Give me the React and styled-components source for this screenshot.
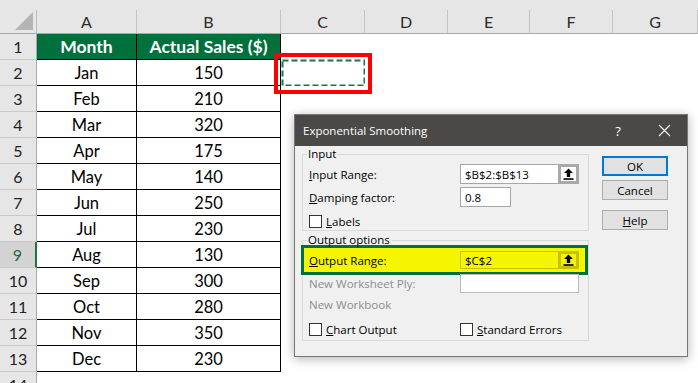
import React from "react";
import styled, { createGlobalStyle } from "styled-components";

const GlobalStyle = createGlobalStyle`
  html, body {
    margin: 0;
    padding: 0;
    background: #fff;
    overflow: hidden;
  }
  * { box-sizing: border-box; }
`;

const sales = [
  ["Jan", 150], ["Feb", 210], ["Mar", 320], ["Apr", 175],
  ["May", 140], ["Jun", 250], ["Jul", 230], ["Aug", 130],
  ["Sep", 300], ["Oct", 280], ["Nov", 350], ["Dec", 230],
];

const columns = ["A", "B", "C", "D", "E", "F", "G"];

const Page = styled.div`
  position: relative;
  width: 698px;
  height: 383px;
  overflow: hidden;
  background: #fff;
  font-family: Lato, "Liberation Sans", sans-serif;
`;

const TopStrip = styled.div`
  height: 10px;
  background: #e6e6e6;
`;

const Sheet = styled.div`
  display: grid;
  grid-template-columns: 37px 100px 144px 84px 83px 82px 83px 85px;
  grid-template-rows: 24px;
  grid-auto-rows: 26px;
`;

const Corner = styled.div`
  background: #e6e6e6;
  border-right: 1px solid #bdbdbd;
  border-bottom: 1px solid #a8a8a8;
  display: flex;
  justify-content: flex-end;
  align-items: flex-end;
  padding: 0 3px 3px 0;
`;

const CornerTriangle = styled.div`
  width: 0;
  height: 0;
  border-left: 18px solid transparent;
  border-bottom: 18px solid #b4b4b4;
`;

const ColHead = styled.div`
  background: #e6e6e6;
  border-right: 1px solid #c4c4c4;
  border-bottom: 1px solid #a8a8a8;
  display: flex;
  align-items: center;
  justify-content: center;
  font-size: 16px;
  color: #2b2b2b;
`;

const RowHead = styled.div`
  background: ${(p) => (p.$active ? "#d3d3d3" : "#e6e6e6")};
  color: ${(p) => (p.$active ? "#1e6b46" : "#222")};
  border-right: ${(p) => (p.$active ? "2px solid #217346" : "1px solid #a8a8a8")};
  border-bottom: 1px solid #c9c9c9;
  display: flex;
  align-items: center;
  justify-content: center;
  font-size: 16px;
`;

const Cell = styled.div`
  position: relative;
  background: ${(p) => (p.$head ? "#00703c" : "#fff")};
  color: ${(p) => (p.$head ? "#fff" : "#000")};
  font-weight: ${(p) => (p.$head ? 700 : 400)};
  font-size: ${(p) => (p.$head ? 17.5 : 16.5)}px;
  border-right: ${(p) => (p.$table ? "1px solid #000" : "none")};
  border-bottom: ${(p) => (p.$table ? "1px solid #000" : "none")};
  display: flex;
  align-items: center;
  justify-content: center;
  white-space: nowrap;
`;

const Marquee = styled.svg`
  position: absolute;
  left: 0;
  top: -1px;
  width: 84px;
  height: 28px;
`;

const Annotation = styled.div`
  position: absolute;
  left: 274px;
  top: 53px;
  width: 98px;
  height: 41px;
  border: 4px solid #ff0000;
`;

/* dialog */

const Dialog = styled.div`
  position: absolute;
  left: 294px;
  top: 114px;
  width: 394px;
  height: 243px;
  background: #f0f0f0;
  border: 1px solid #777;
  box-shadow: 0 2px 10px rgba(0, 0, 0, 0.3);
  font-family: "Open Sans", "Noto Sans", sans-serif;
  font-size: 11.5px;
  color: #000;
  display: flex;
  flex-direction: column;
`;

const TitleBar = styled.div`
  height: 31px;
  flex: none;
  background: #4a4947;
  color: #fff;
  display: flex;
  align-items: center;
  padding-left: 8px;
  font-size: 11.5px;
`;

const Title = styled.div`
  flex: 1;
`;

const TitleButton = styled.div`
  width: 46px;
  height: 100%;
  display: flex;
  align-items: center;
  justify-content: center;
  font-size: 13px;
`;

const Body = styled.div`
  flex: 1;
  display: flex;
  padding: 0 0 0 7px;
`;

const Left = styled.div`
  width: 287px;
  display: flex;
  flex-direction: column;
`;

const Group = styled.fieldset`
  margin: ${(p) => p.$mt}px 0 0 0;
  padding: 3px 6px ${(p) => p.$pb}px 6px;
  border: 1px solid #d9d9d9;
  min-width: 0;
`;

const Legend = styled.legend`
  padding: 0 1px;
  margin-left: -2px;
  line-height: 14px;
  height: 14px;
`;

const Row = styled.div`
  display: flex;
  align-items: center;
  height: ${(p) => p.$h}px;
  margin-top: ${(p) => p.$mt || 0}px;
  color: ${(p) => (p.$disabled ? "#8d8d8d" : "#000")};
`;

const Label = styled.div`
  width: 151px;
  flex: none;
`;

const TextBox = styled.div`
  display: flex;
  align-items: center;
  height: ${(p) => p.$h || 20}px;
  width: ${(p) => p.$w}px;
  background: ${(p) => (p.$yellow ? "#f5f500" : "#fff")};
  border: 1px solid ${(p) => (p.$yellow ? "#c4c400" : p.$disabled ? "#b9b9b9" : "#a6a6a6")};
  padding-left: 4px;
`;

const BoxText = styled.div`
  flex: 1;
`;

const UpButton = styled.div`
  width: 21px;
  height: calc(100% + 2px);
  margin: -1px -1px -1px 0;
  border: 3px solid ${(p) => (p.$yellow ? "#c4c400" : "#a9a9a9")};
  background: ${(p) => (p.$yellow ? "#f5f500" : "#fff")};
  display: flex;
  align-items: center;
  justify-content: center;
`;

const Highlight = styled.div`
  width: 287px;
  height: 30px;
  margin: -5px 0 0 -8px;
  border: 3px solid #00703c;
  background: #f5f500;
  padding-left: 5px;
  display: flex;
  align-items: center;
`;

const Check = styled.span`
  width: 13px;
  height: 13px;
  flex: none;
  border: 1px solid #333;
  background: #fff;
  margin-right: 4px;
`;

const CheckItem = styled.div`
  display: flex;
  align-items: center;
  width: ${(p) => p.$w || "auto"};
`;

const Right = styled.div`
  display: flex;
  flex-direction: column;
  margin-left: 13px;
  padding-top: 10px;
`;

const Button = styled.div`
  width: 66px;
  height: 20px;
  margin-bottom: ${(p) => p.$mb}px;
  background: #e1e1e1;
  border: ${(p) => (p.$default ? "2px solid #0078d7" : "1px solid #adadad")};
  display: flex;
  align-items: center;
  justify-content: center;
`;

const UpArrow = () => (
  <svg width="11" height="12" viewBox="0 0 11 12">
    <path d="M5.5 0.5 L10 5 H7.2 V9 H3.8 V5 H1 Z" fill="#000" />
    <rect x="0.5" y="10.2" width="10" height="1.6" fill="#000" />
  </svg>
);

const CloseIcon = () => (
  <svg width="13" height="13" viewBox="0 0 13 13">
    <path d="M1 1 L12 12 M12 1 L1 12" stroke="#fff" strokeWidth="1.1" />
  </svg>
);

const RangeBox = ({ value, yellow, h }) => (
  <TextBox $w={119} $yellow={yellow} $h={h}>
    <BoxText>{value}</BoxText>
    <UpButton $yellow={yellow}>
      <UpArrow />
    </UpButton>
  </TextBox>
);

export default function App() {
  const rows = [["Month", "Actual Sales ($)"], ...sales];

  return (
    <Page>
      <GlobalStyle />
      <TopStrip />
      <Sheet>
        <Corner>
          <CornerTriangle />
        </Corner>
        {columns.map((c) => (
          <ColHead key={c}>{c}</ColHead>
        ))}
        {Array.from({ length: 14 }, (_, i) => {
          const r = i + 1;
          const data = rows[i];
          return (
            <React.Fragment key={r}>
              <RowHead $active={r === 9}>{r}</RowHead>
              {columns.map((c, ci) => {
                const inTable = data && ci < 2;
                return (
                  <Cell key={c} $table={inTable} $head={r === 1 && inTable}>
                    {inTable ? data[ci] : null}
                    {r === 2 && c === "C" ? (
                      <Marquee viewBox="0 0 84 28">
                        <rect
                          x="1.5"
                          y="1.5"
                          width="82"
                          height="25"
                          fill="none"
                          stroke="#217346"
                          strokeWidth="2"
                          strokeDasharray="6 3"
                        />
                      </Marquee>
                    ) : null}
                  </Cell>
                );
              })}
            </React.Fragment>
          );
        })}
      </Sheet>

      <Annotation />

      <Dialog>
        <TitleBar>
          <Title>Exponential Smoothing</Title>
          <TitleButton>?</TitleButton>
          <TitleButton>
            <CloseIcon />
          </TitleButton>
        </TitleBar>
        <Body>
          <Left>
            <Group $mt={1} $pb={2}>
              <Legend>Input</Legend>
              <Row $h={20}>
                <Label>
                  <u>I</u>nput Range:
                </Label>
                <RangeBox value="$B$2:$B$13" />
              </Row>
              <Row $h={20} $mt={3}>
                <Label>
                  <u>D</u>amping factor:
                </Label>
                <TextBox $w={51}>0.8</TextBox>
              </Row>
              <Row $h={13} $mt={8}>
                <CheckItem>
                  <Check />
                  <span>
                    <u>L</u>abels
                  </span>
                </CheckItem>
              </Row>
            </Group>
            <Group $mt={2} $pb={4}>
              <Legend>Output options</Legend>
              <Highlight>
                <Label>
                  <u>O</u>utput Range:
                </Label>
                <RangeBox value="$C$2" yellow h={18} />
              </Highlight>
              <Row $h={19} $mt={-1} $disabled>
                <Label>New Worksheet Ply:</Label>
                <TextBox $w={119} $h={19} $disabled />
              </Row>
              <Row $h={16} $mt={3} $disabled>
                <Label>New Workbook</Label>
              </Row>
              <Row $h={13} $mt={11}>
                <CheckItem $w="151px">
                  <Check />
                  <span>
                    <u>C</u>hart Output
                  </span>
                </CheckItem>
                <CheckItem>
                  <Check />
                  <span>
                    <u>S</u>tandard Errors
                  </span>
                </CheckItem>
              </Row>
            </Group>
          </Left>
          <Right>
            <Button $default $mb={4}>OK</Button>
            <Button $mb={10}>Cancel</Button>
            <Button $mb={0}>
              <u>H</u>elp
            </Button>
          </Right>
        </Body>
      </Dialog>
    </Page>
  );
}
